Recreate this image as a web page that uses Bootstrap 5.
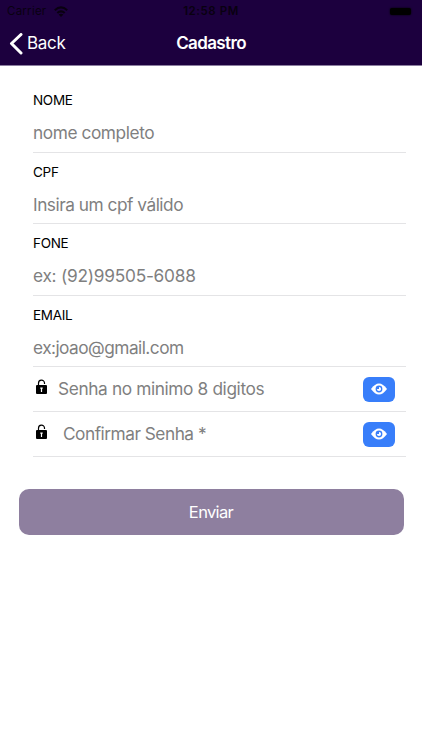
<!DOCTYPE html>
<html lang="pt-BR">
<head>
<meta charset="utf-8">
<meta name="viewport" content="width=device-width, initial-scale=1">
<title>Cadastro</title>
<link href="https://cdn.jsdelivr.net/npm/bootstrap@5.3.0/dist/css/bootstrap.min.css" rel="stylesheet">
<style>
body{font-family:Inter,"Liberation Sans",sans-serif;color:#000;min-height:750px;overflow:hidden}
.app-head{background:#1c003e;height:66px;border-bottom:1px solid #8b7e9f}
.status{height:22px;padding:0 7px;font-size:11.5px;line-height:22px;color:#090010}
.status .carrier{letter-spacing:.25px}
.status .time{font-weight:600;letter-spacing:.55px}
.battery{width:21px;height:7px;background:#000;border-radius:2px;box-shadow:0 0 2px #000}
.titlebar{height:43px;padding-left:9px;padding-right:9px}
.back{font-size:17px;line-height:43px;letter-spacing:-.3px}
.title{font-size:17px;font-weight:600;letter-spacing:-.62px;line-height:43px}
.fields{padding:0 16px 0 33px;margin-top:15px}
.field{height:71.6px;border-bottom:1px solid #e4e4e6;padding-top:11px}
.field label{display:block;font-size:13.5px;line-height:16px;letter-spacing:-.3px}
.field input,.secret input{color:#7f7f7f;font-size:17.3px;line-height:24px;height:24px;outline:0;background:none}
.field input{margin-top:13px}
input::placeholder{color:#7f7f7f;opacity:1}
#nome{letter-spacing:-.43px}
#cpf{letter-spacing:-.49px}
#fone{letter-spacing:-.25px}
#email{letter-spacing:-.54px}
.secret{height:44.8px;border-bottom:1px solid #e4e4e6;padding-left:2px;padding-right:11px}
.lock{width:13px;height:16px;margin-bottom:5px}
.first input{margin-left:10px;letter-spacing:-.38px}
.second input{margin-left:15px;letter-spacing:-.5px}
.eye{width:32px;height:25px;background:#387efa;border-radius:6px}
.send{margin:32.5px 18.5px 0;height:46px;width:385px;background:#8e7f9f;border-radius:10px;color:#fff;font-size:16.5px;letter-spacing:-.65px}
</style>
</head>
<body class="bg-white">
<header class="app-head text-white">
  <div class="status row g-0 align-items-center">
    <div class="col d-flex align-items-center gap-2"><span class="carrier">Carrier</span>
      <svg width="14" height="11" viewBox="0 0 14 11" fill="none" stroke="#090010" stroke-width="2.200"><path d="M.8 4.200Q7-1.300 13.200 4.200M3.300 7Q7 3.900 10.700 7"/><path d="M7 11 4.600 8.500Q7 6.800 9.400 8.500Z" fill="#090010" stroke="none"/></svg>
    </div>
    <div class="col-auto time">12:58 PM</div>
    <div class="col d-flex justify-content-end"><span class="battery me-1"></span></div>
  </div>
  <div class="titlebar row g-0">
    <div class="col back d-flex align-items-center">
      <svg class="me-1" width="14" height="22" viewBox="0 0 14 22" fill="none" stroke="#fff" stroke-width="3" stroke-linecap="round" stroke-linejoin="round"><path d="M12 1.500 2.500 10.500l9.500 9.500"/></svg><span>Back</span>
    </div>
    <div class="col-auto title">Cadastro</div>
    <div class="col"></div>
  </div>
</header>
<form class="m-0">
  <div class="fields">
    <div class="field"><label for="nome">NOME</label><input id="nome" class="d-block w-100 border-0 p-0" placeholder="nome completo"></div>
    <div class="field"><label for="cpf">CPF</label><input id="cpf" class="d-block w-100 border-0 p-0" placeholder="Insira um cpf válido"></div>
    <div class="field"><label for="fone">FONE</label><input id="fone" class="d-block w-100 border-0 p-0" placeholder="ex: (92)99505-6088"></div>
    <div class="field"><label for="email">EMAIL</label><input id="email" class="d-block w-100 border-0 p-0" placeholder="ex:joao@gmail.com"></div>
    <div class="secret first d-flex align-items-center">
      <svg class="lock flex-shrink-0" viewBox="0 0 13 16"><path d="M3.500 7V4.200a3 3 0 0 1 6-.2V5" fill="none" stroke="#000" stroke-width="1.200"/><rect x="1" y="6" width="11" height="9" rx="1" fill="#000"/><path d="M6.500 8.500v4.500M5.300 9.200h2.400" stroke="#fff" stroke-width="1.200"/></svg>
      <input class="flex-grow-1 border-0 p-0" aria-label="Senha" placeholder="Senha no minimo 8 digitos">
      <button type="button" class="eye btn p-0 border-0 d-flex align-items-center justify-content-center flex-shrink-0" aria-label="Mostrar senha"><svg width="18" height="12" viewBox="0 0 18 12"><path d="M1 6Q9-5 17 6 9 17 1 6Z" fill="#fff"/><circle cx="9" cy="6" r="3.400" fill="#387efa"/><circle cx="9" cy="6" r="2.100" fill="#fff"/><path d="M9 6V3.500A2.500 2.500 0 0 0 6.500 6Z" fill="#387efa"/></svg></button>
    </div>
    <div class="secret second d-flex align-items-center">
      <svg class="lock flex-shrink-0" viewBox="0 0 13 16"><path d="M3.500 7V4.200a3 3 0 0 1 6-.2V5" fill="none" stroke="#000" stroke-width="1.200"/><rect x="1" y="6" width="11" height="9" rx="1" fill="#000"/><path d="M6.500 8.500v4.500M5.300 9.200h2.400" stroke="#fff" stroke-width="1.200"/></svg>
      <input class="flex-grow-1 border-0 p-0" aria-label="Confirmar senha" placeholder="Confirmar Senha *">
      <button type="button" class="eye btn p-0 border-0 d-flex align-items-center justify-content-center flex-shrink-0" aria-label="Mostrar senha"><svg width="18" height="12" viewBox="0 0 18 12"><path d="M1 6Q9-5 17 6 9 17 1 6Z" fill="#fff"/><circle cx="9" cy="6" r="3.400" fill="#387efa"/><circle cx="9" cy="6" r="2.100" fill="#fff"/><path d="M9 6V3.500A2.500 2.500 0 0 0 6.500 6Z" fill="#387efa"/></svg></button>
    </div>
  </div>
  <button type="button" class="send btn border-0 d-block p-0">Enviar</button>
</form>
<script src="https://cdn.jsdelivr.net/npm/bootstrap@5.3.0/dist/js/bootstrap.bundle.min.js"></script>
</body>
</html>
